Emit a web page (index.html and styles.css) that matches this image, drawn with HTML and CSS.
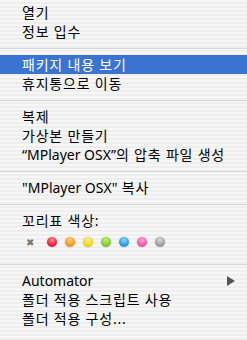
FILE: index.html
```
<!DOCTYPE html>
<html lang="ko">

<head>
    <meta charset="UTF-8">
    <meta name="viewport" content="width=device-width, initial-scale=1.0">
    <title>Finder 메뉴</title>
    <link rel="stylesheet" href="styles.css">
</head>

<body>
    <div class="menu">
        <div class="menu-item">열기</div>
        <div class="menu-item">정보 입수</div>
        <div class="separator"></div>
        <div class="menu-item selected">패키지 내용 보기</div>
        <div class="menu-item">휴지통으로 이동</div>
        <div class="separator"></div>
        <div class="menu-item">복제</div>
        <div class="menu-item">가상본 만들기</div>
        <div class="menu-item"><span class="en">“MPlayer OSX”</span>의 압축 파일 생성</div>
        <div class="separator"></div>
        <div class="menu-item"><span class="en">"MPlayer OSX"</span> 복사</div>
        <div class="separator"></div>
        <div class="menu-item">꼬리표 색상:</div>
        <div class="label-colors">
            <span class="no-label">✖</span>
            <span class="dot red"></span>
            <span class="dot orange"></span>
            <span class="dot yellow"></span>
            <span class="dot green"></span>
            <span class="dot blue"></span>
            <span class="dot pink"></span>
            <span class="dot gray"></span>
        </div>
        <div class="separator"></div>
        <div class="menu-item submenu">
            <span class="en">Automator</span>
            <span class="arrow"></span>
        </div>
        <div class="menu-item">폴더 적용 스크립트 사용</div>
        <div class="menu-item">폴더 적용 구성...</div>
    </div>
</body>

</html>
```

FILE: styles.css
```
body {
    margin: 0;
    font-family: 'Noto Sans', 'Noto Sans CJK KR', sans-serif;
    font-size: 14px;
    color: #000;
}

.menu {
    height: 340px;
    padding: 3px 0 5px;
    box-sizing: border-box;
    background: repeating-linear-gradient(#f7f7f7 0, #f7f7f7 2px, #eeeeee 2px, #eeeeee 4px);
}

.menu-item {
    height: 19px;
    line-height: 19px;
    padding-left: 22px;
    white-space: nowrap;
    letter-spacing: 0.8px;
}

/* latin text keeps normal spacing */
.en {
    letter-spacing: 0;
}

.menu-item.selected {
    background-color: #3a73d0;
    color: #fff;
}

.submenu {
    display: flex;
    justify-content: space-between;
    align-items: center;
    padding-right: 12px;
}

.arrow {
    width: 0;
    height: 0;
    border-top: 5px solid transparent;
    border-bottom: 5px solid transparent;
    border-left: 8px solid #555;
}

.separator {
    height: 1px;
    margin: 7px 0 6px;
    background-color: #d6d6d6;
}

.label-colors {
    height: 24px;
    margin-bottom: 10px;
    padding-left: 25px;
    display: flex;
    align-items: center;
    gap: 8px;
}

.no-label {
    width: 10px;
    font-size: 10px;
    color: #777;
    text-align: center;
    margin-right: 4px;
}

.dot {
    width: 10px;
    height: 10px;
    border-radius: 50%;
    box-shadow: 0 0 0 0.5px rgba(0, 0, 0, 0.15);
}

.red {
    background: radial-gradient(circle at 50% 30%, #ff8a96 0, #f2203c 60%, #d0102a 100%);
}

.orange {
    background: radial-gradient(circle at 50% 30%, #ffd27a 0, #f99a1c 60%, #e07a08 100%);
}

.yellow {
    background: radial-gradient(circle at 50% 30%, #fff38a 0, #f2d51a 60%, #d8b808 100%);
}

.green {
    background: radial-gradient(circle at 50% 30%, #c2f07a 0, #84cc2a 60%, #5ea818 100%);
}

.blue {
    background: radial-gradient(circle at 50% 30%, #8ad4ff 0, #2a9ee0 60%, #1478c0 100%);
}

.pink {
    background: radial-gradient(circle at 50% 30%, #ffa8d4 0, #f05aa8 60%, #d03888 100%);
}

.gray {
    background: radial-gradient(circle at 50% 30%, #d8d8d8 0, #a0a0a0 60%, #808080 100%);
}
```
